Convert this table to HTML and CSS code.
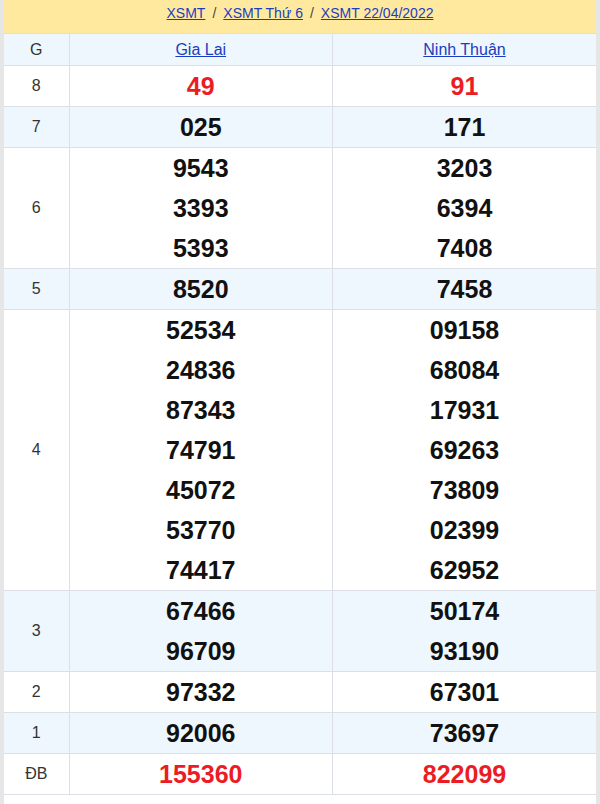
FILE: index.html
```html
<!DOCTYPE html>
<html lang="vi">
<head>
<meta charset="utf-8">
<title>XSMT 22/04/2022</title>
<link rel="stylesheet" href="styles.css">
</head>
<body>
<div class="page">
  <div class="crumbs">
    <a href="#">XSMT</a><span class="sep">/</span><a href="#">XSMT Thứ 6</a><span class="sep">/</span><a href="#">XSMT 22/04/2022</a>
  </div>
  <table class="kq">
    <colgroup><col class="c-g"><col class="c-p"><col class="c-p"></colgroup>
    <thead>
      <tr class="alt"><th class="g">G</th><th><a href="#">Gia Lai</a></th><th><a href="#">Ninh Thuận</a></th></tr>
    </thead>
    <tbody>
      <tr><td class="g">8</td><td class="n red"><div>49</div></td><td class="n red"><div>91</div></td></tr>
      <tr class="alt"><td class="g">7</td><td class="n"><div>025</div></td><td class="n"><div>171</div></td></tr>
      <tr><td class="g">6</td><td class="n"><div>9543</div><div>3393</div><div>5393</div></td><td class="n"><div>3203</div><div>6394</div><div>7408</div></td></tr>
      <tr class="alt"><td class="g">5</td><td class="n"><div>8520</div></td><td class="n"><div>7458</div></td></tr>
      <tr><td class="g">4</td><td class="n"><div>52534</div><div>24836</div><div>87343</div><div>74791</div><div>45072</div><div>53770</div><div>74417</div></td><td class="n"><div>09158</div><div>68084</div><div>17931</div><div>69263</div><div>73809</div><div>02399</div><div>62952</div></td></tr>
      <tr class="alt"><td class="g">3</td><td class="n"><div>67466</div><div>96709</div></td><td class="n"><div>50174</div><div>93190</div></td></tr>
      <tr><td class="g">2</td><td class="n"><div>97332</div></td><td class="n"><div>67301</div></td></tr>
      <tr class="alt"><td class="g">1</td><td class="n"><div>92006</div></td><td class="n"><div>73697</div></td></tr>
      <tr><td class="g">ĐB</td><td class="n red"><div>155360</div></td><td class="n red"><div>822099</div></td></tr>
    </tbody>
  </table>
</div>
</body>
</html>
```
FILE: styles.css
```css
html, body {
  margin: 0;
  padding: 0;
  background: #ffffff;
}
body {
  font-family: "Liberation Sans", Arial, sans-serif;
  color: #222;
}
.page {
  width: 592px;
  min-height: 804px;
  border-left: 4px solid #e6e6e6;
  border-right: 4px solid #e6e6e6;
  background: #fff;
  box-sizing: content-box;
}
.crumbs {
  height: 33px;
  box-sizing: border-box;
  padding-top: 3px;
  line-height: 20px;
  background: #ffe99f;
  text-align: center;
  font-size: 14px;
  color: #555;
}
.crumbs a {
  color: #1b3dbf;
  text-decoration: underline;
}
.crumbs .sep {
  margin: 0 7px;
  color: #444;
}
.kq {
  width: 592px;
  border-collapse: collapse;
  table-layout: fixed;
}
.kq .c-g { width: 65px; }
.kq th, .kq td {
  border: 1px solid #dcdfe5;
  padding: 0;
  text-align: center;
  vertical-align: middle;
}
.kq tr > :first-child { border-left: none; }
.kq tr > :last-child { border-right: none; }
.kq th {
  height: 31px;
  font-weight: normal;
  font-size: 16px;
}
.kq th a {
  color: #1b3dbf;
  text-decoration: underline;
}
.kq .alt { background: #eef6fe; }
.kq .g {
  font-size: 16px;
  color: #333;
}
.kq .n div {
  height: 40px;
  line-height: 40px;
  font-size: 25px;
  font-weight: bold;
  color: #111;
}
.kq .n.red div {
  color: #ec1c24;
}
```
